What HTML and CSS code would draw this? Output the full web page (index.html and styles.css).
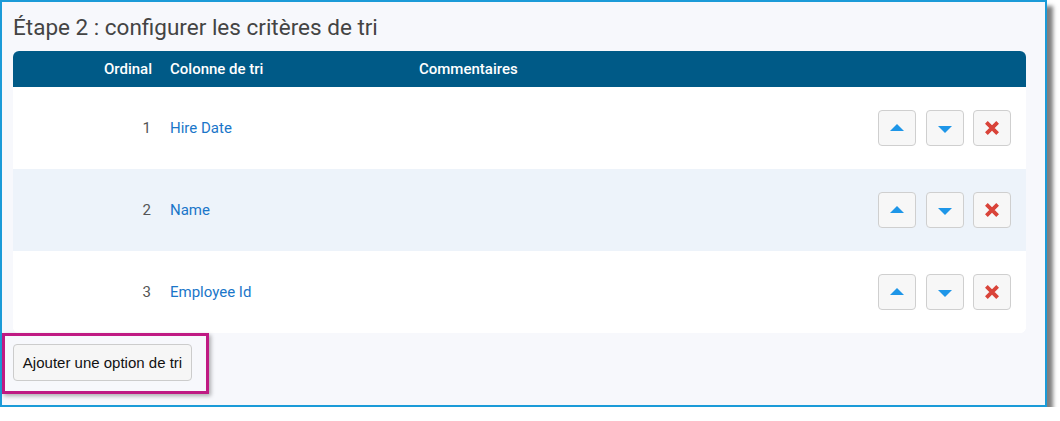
FILE: index.html
```html
<!DOCTYPE html>
<html lang="fr">
<head>
    <meta charset="UTF-8">
    <title>Étape 2 : configurer les critères de tri</title>
    <link rel="stylesheet" href="styles.css">
</head>
<body>
    <div class="frame">
        <h2 class="step-title">Étape 2 : configurer les critères de tri</h2>

        <div class="sort-table">
            <div class="sort-head">
                <div class="col-ord">Ordinal</div>
                <div class="col-name">Colonne de tri</div>
                <div class="col-note">Commentaires</div>
                <div></div>
            </div>

            <div class="sort-row">
                <div class="col-ord">1</div>
                <div class="col-name"><a href="#">Hire Date</a></div>
                <div class="col-note"></div>
                <div class="actions">
                    <button class="icon-btn"><span class="tri-up"></span></button>
                    <button class="icon-btn"><span class="tri-down"></span></button>
                    <button class="icon-btn">
                        <svg class="cross" viewBox="0 0 16 16"><path d="M3 3L13 13M13 3L3 13"/></svg>
                    </button>
                </div>
            </div>

            <div class="sort-row alt">
                <div class="col-ord">2</div>
                <div class="col-name"><a href="#">Name</a></div>
                <div class="col-note"></div>
                <div class="actions">
                    <button class="icon-btn"><span class="tri-up"></span></button>
                    <button class="icon-btn"><span class="tri-down"></span></button>
                    <button class="icon-btn">
                        <svg class="cross" viewBox="0 0 16 16"><path d="M3 3L13 13M13 3L3 13"/></svg>
                    </button>
                </div>
            </div>

            <div class="sort-row">
                <div class="col-ord">3</div>
                <div class="col-name"><a href="#">Employee Id</a></div>
                <div class="col-note"></div>
                <div class="actions">
                    <button class="icon-btn"><span class="tri-up"></span></button>
                    <button class="icon-btn"><span class="tri-down"></span></button>
                    <button class="icon-btn">
                        <svg class="cross" viewBox="0 0 16 16"><path d="M3 3L13 13M13 3L3 13"/></svg>
                    </button>
                </div>
            </div>
        </div>

        <button class="add-btn">Ajouter une option de tri</button>
        <div class="highlight"></div>
    </div>
</body>
</html>
```

FILE: styles.css
```css
body {
    margin: 0;
    background: #fff;
    font-family: Roboto, "Liberation Sans", sans-serif;
}
.frame {
    position: relative;
    width: 1014px;
    height: 403px;
    border: 2px solid #1b9bd8;
    background: #f7f8fc;
    box-shadow: 6px 6px 4px rgba(0,0,0,0.5);
    padding: 0 18px 0 11px;
}
.step-title {
    margin: 0;
    padding: 11px 0 0 0;
    height: 38px;
    box-sizing: border-box;
    font-weight: 400;
    font-size: 22.5px;
    line-height: 28px;
    color: #444;
}
.sort-table {
    margin-top: 11px;
    width: 1013px;
    border-radius: 6px;
    overflow: hidden;
    background: #fff;
}
.sort-head,
.sort-row {
    display: grid;
    grid-template-columns: 147px 249px 1fr auto;
    align-items: center;
}
.sort-head {
    height: 36px;
    background: #005a87;
    color: #fff;
    font-weight: 500;
    font-size: 15px;
}
.sort-row {
    height: 82px;
    font-size: 15px;
    background: #fff;
}
.sort-row.alt {
    background: #edf3fa;
}
.col-ord {
    text-align: right;
    padding-right: 8px;
}
.sort-row .col-ord {
    padding-right: 9px;
    color: #555;
}
.col-name {
    padding-left: 10px;
}
.col-note {
    padding-left: 10px;
}
.col-name a {
    color: #1a76c9;
    text-decoration: none;
}
.actions {
    display: flex;
    gap: 10px;
    padding-right: 15px;
}
.icon-btn {
    width: 38px;
    height: 36px;
    padding: 0;
    border: 1px solid #cfcfcf;
    border-radius: 4px;
    background: #f7f7f7;
    display: flex;
    align-items: center;
    justify-content: center;
}
.icon-btn + .icon-btn + .icon-btn {
    margin-left: -1px;
}
.tri-up {
    width: 0;
    height: 0;
    border-left: 7px solid transparent;
    border-right: 7px solid transparent;
    border-bottom: 7px solid #1e96e8;
    margin-top: -2px;
}
.tri-down {
    width: 0;
    height: 0;
    border-left: 7px solid transparent;
    border-right: 7px solid transparent;
    border-top: 7px solid #1e96e8;
    margin-top: 3px;
}
.cross {
    width: 18px;
    height: 18px;
    fill: none;
    stroke: #d9443a;
    stroke-width: 3.4;
}
.add-btn {
    display: block;
    margin-top: 11px;
    width: 179px;
    height: 37px;
    padding: 0;
    border: 1px solid #ccc;
    border-radius: 4px;
    background: #f6f6f6;
    font-family: Arial, "Liberation Sans", sans-serif;
    font-size: 15px;
    color: #111;
}
/* annotation box around the add button */
.highlight {
    position: absolute;
    left: 0;
    top: 331px;
    width: 201px;
    height: 55px;
    border: 3px solid #bf1a83;
    box-shadow: 2px 2px 4px rgba(0,0,0,0.3);
    pointer-events: none;
}
```
